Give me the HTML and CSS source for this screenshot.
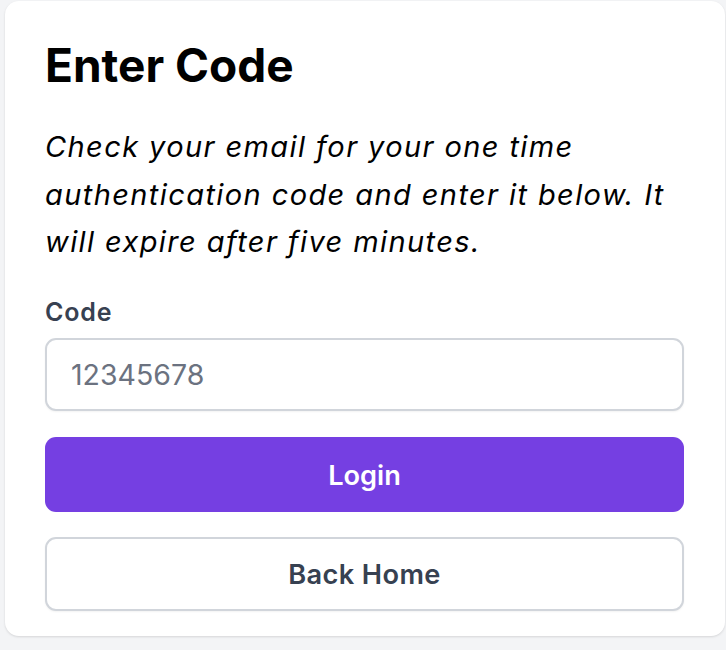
FILE: index.html
```html
<!DOCTYPE html>
<html lang="en">
<head>
<meta charset="utf-8">
<title>Enter Code</title>
<link rel="stylesheet" href="styles.css">
</head>
<body>
<main class="card">
  <h1 class="title">Enter Code</h1>
  <p class="intro">Check your email for your one time authentication code and enter it below. It will expire after five minutes.</p>
  <form class="form">
    <label class="label" for="code">Code</label>
    <input class="input" id="code" type="text" placeholder="12345678">
    <button class="btn btn-primary" type="button">Login</button>
    <button class="btn btn-secondary" type="button">Back Home</button>
  </form>
</main>
</body>
</html>
```

FILE: styles.css
```css
* { box-sizing: border-box; }

html, body {
  margin: 0;
  background: #f3f4f6;
}

body {
  padding: 1px 1px 14px 5px;
  font-family: Inter, "Noto Sans", "Liberation Sans", sans-serif;
}

.card {
  background: #ffffff;
  border-radius: 14px;
  padding: 38px 41px 25px 40px;
  box-shadow: 0 1px 3px rgba(0, 0, 0, 0.08), 0 1px 2px rgba(0, 0, 0, 0.05);
}

.title {
  margin: 0;
  font-size: 46px;
  line-height: 52px;
  font-weight: 700;
  color: #000;
}

.intro {
  margin: 32px 0 0;
  font-size: 29px;
  line-height: 47.5px;
  letter-spacing: 1.4px;
  font-style: italic;
  color: #000;
}

.form {
  display: flex;
  flex-direction: column;
  margin-top: 29px;
}

.label {
  font-size: 25px;
  line-height: 34px;
  letter-spacing: 0.8px;
  font-weight: 600;
  color: #374151;
}

.input {
  margin-top: 9px;
  height: 73px;
  border: 2px solid #d1d5db;
  border-radius: 11px;
  padding: 0 24px;
  font-family: inherit;
  font-size: 28.5px;
  color: #111827;
  background: #fff;
  outline: none;
  box-shadow: 0 1px 2px rgba(0, 0, 0, 0.05);
}

.input::placeholder {
  color: #6b7280;
}

.btn {
  height: 75px;
  border-radius: 11px;
  font-family: inherit;
  font-size: 27.2px;
  font-weight: 600;
  cursor: pointer;
}

.btn-primary {
  margin-top: 26px;
  padding-top: 3px;
  border: none;
  background: #753fe2;
  color: #fff;
}

.btn-secondary {
  margin-top: 25px;
  height: 74px;
  padding-top: 3px;
  border: 2px solid #d1d5db;
  background: #fff;
  color: #374151;
  letter-spacing: 0.4px;
  box-shadow: 0 1px 2px rgba(0, 0, 0, 0.05);
}
```
